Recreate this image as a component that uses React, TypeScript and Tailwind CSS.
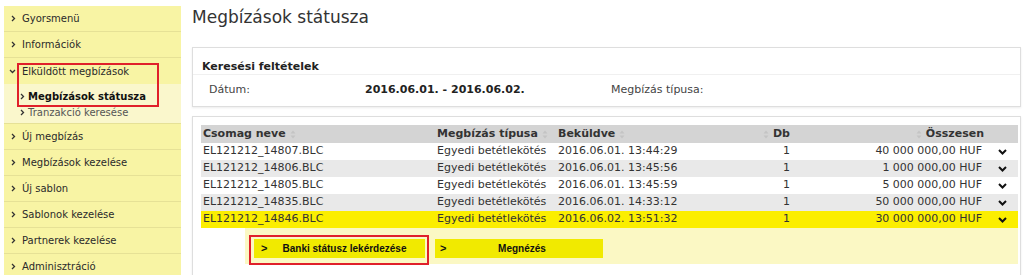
import React from 'react';

const menu = [
  'Gyorsmenü',
  'Információk',
];

const menuAfter = [
  'Új megbízás',
  'Megbízások kezelése',
  'Új sablon',
  'Sablonok kezelése',
  'Partnerek kezelése',
  'Adminisztráció',
];

const rows = [
  { name: 'EL121212_14807.BLC', date: '2016.06.01. 13:44:29', sum: '40 000 000,00 HUF' },
  { name: 'EL121212_14806.BLC', date: '2016.06.01. 13:45:56', sum: '1 000 000,00 HUF' },
  { name: 'EL121212_14805.BLC', date: '2016.06.01. 13:45:59', sum: '5 000 000,00 HUF' },
  { name: 'EL121212_14835.BLC', date: '2016.06.01. 14:33:12', sum: '50 000 000,00 HUF' },
  { name: 'EL121212_14846.BLC', date: '2016.06.02. 13:51:32', sum: '30 000 000,00 HUF' },
];

const SortIcon = () => (
  <svg width="6" height="9" viewBox="0 0 6 9" className="inline-block mx-[4px]">
    <path d="M3 0.5 L5.5 3.5 H0.5 Z" fill="#c4c4c4" />
    <path d="M3 8.5 L5.5 5.5 H0.5 Z" fill="#c4c4c4" />
  </svg>
);

const Chevron = ({ down = false }: { down?: boolean }) => (
  <svg width="5" height="7" viewBox="0 0 5 7" className={down ? 'rotate-90' : ''}>
    <path d="M1 1 L3.5 3.5 L1 6" stroke="#333" strokeWidth="1.3" fill="none" />
  </svg>
);

const RowChevron = () => (
  <svg width="9" height="6" viewBox="0 0 9 6">
    <path d="M1 1 L4.5 4.5 L8 1" stroke="#111" strokeWidth="2" fill="none" />
  </svg>
);

const MenuItem = ({ label }: { label: string }) => (
  <div className="h-[26px] border-b border-[#e6e196] flex items-center pl-[7px] gap-[6px]">
    <Chevron />
    <span>{label}</span>
  </div>
);

const App: React.FC = () => {
  return (
    <div className="w-[1024px] h-[275px] overflow-hidden bg-white flex pt-[6px] pl-[4px] text-[11px] text-[#333] font-['DejaVu_Sans',Verdana,sans-serif]">
      <div className="relative w-[177px] shrink-0 bg-[#f8f4a4] self-start text-[10px] text-[#2a2a2a]">
        {menu.map((m) => (
          <MenuItem key={m} label={m} />
        ))}
        <div className="h-[26px] flex items-center pl-[6px] gap-[7px]">
          <Chevron down />
          <span>Elküldött megbízások</span>
        </div>
        <div className="bg-[#faf7cc] pt-[4px] pb-[3px] border-b border-[#e6e196]">
          <div className="h-[16px] flex items-center pl-[16px] gap-[3px] font-bold text-[#111]">
            <Chevron />
            <span>Megbízások státusza</span>
          </div>
          <div className="h-[16px] flex items-center pl-[16px] gap-[3px] text-[#555]">
            <Chevron />
            <span>Tranzakció keresése</span>
          </div>
        </div>
        {menuAfter.map((m) => (
          <MenuItem key={m} label={m} />
        ))}
        <div className="absolute left-[13px] top-[57px] w-[142px] h-[44px] border-2 border-[#e0202a]" />
      </div>

      <div className="ml-[11px] flex-1 pr-[3px]">
        <h1 className="h-[41px] text-[17px] leading-[22px] text-[#333] font-normal">Megbízások státusza</h1>

        <div className="border border-[#dedede] shadow-[0_1px_2px_rgba(0,0,0,0.08)]">
          <div className="pt-[11px] pb-[1px] pl-[9px] h-[27px] border-b border-[#f0f0f0] font-bold text-[#222]">
            Keresési feltételek
          </div>
          <div className="h-[31px] flex items-center pl-[16px] text-[#444]">
            <span className="w-[156px]">Dátum:</span>
            <span className="w-[246px] font-bold text-[#222]">2016.06.01. - 2016.06.02.</span>
            <span>Megbízás típusa:</span>
          </div>
        </div>

        <div className="mt-[9px] border border-[#dedede] shadow-[0_1px_2px_rgba(0,0,0,0.08)] pt-[8px] pl-[8px] pr-[2px] h-[200px]">
          <div className="grid grid-cols-[236px_121px_150px_84px_194px_32px]">
            <div className="contents font-bold text-[#333]">
              <div className="bg-[#d4d4d4] h-[18px] flex items-center pl-[2px]">Csomag neve<SortIcon /></div>
              <div className="bg-[#d4d4d4] h-[18px] flex items-center">Megbízás típusa<SortIcon /></div>
              <div className="bg-[#d4d4d4] h-[18px] flex items-center">Beküldve<SortIcon /></div>
              <div className="bg-[#d4d4d4] h-[18px] flex items-center justify-end pr-[2px]"><SortIcon />Db</div>
              <div className="bg-[#d4d4d4] h-[18px] flex items-center justify-end pr-[2px]"><SortIcon />Összesen</div>
              <div className="bg-[#d4d4d4] h-[18px]" />
            </div>
            {rows.map((r, i) => {
              const bg = i === 4 ? 'bg-[#fbee00]' : i % 2 === 1 ? 'bg-[#e9e9e9]' : 'bg-white';
              return (
                <div key={r.name} className="contents">
                  <div className={`${bg} h-[17px] flex items-center pl-[2px]`}>{r.name}</div>
                  <div className={`${bg} h-[17px] flex items-center`}>Egyedi betétlekötés</div>
                  <div className={`${bg} h-[17px] flex items-center`}>{r.date}</div>
                  <div className={`${bg} h-[17px] flex items-center justify-end pr-[2px]`}>1</div>
                  <div className={`${bg} h-[17px] flex items-center justify-end pr-[4px]`}>{r.sum}</div>
                  <div className={`${bg} h-[17px] flex items-center justify-center`}><RowChevron /></div>
                </div>
              );
            })}
          </div>
          <div className="ml-[44px] h-[36px] bg-[#fbf8c4] flex items-start pt-[11px] pl-[9px] gap-[10px] font-['Liberation_Sans',Arial,sans-serif] font-bold text-[10px] text-[#111]">
            <div className="relative w-[171px] h-[19px] bg-[#f1ea00] flex items-center">
              <span className="absolute left-[7px] text-[11px] font-bold">&gt;</span>
              <span className="w-full text-center pl-[10px]">Banki státusz lekérdezése</span>
              <div className="absolute -left-[5px] -top-[4px] w-[180px] h-[30px] border-2 border-[#e0202a]" />
            </div>
            <div className="relative w-[168px] h-[19px] bg-[#f1ea00] flex items-center">
              <span className="absolute left-[5px] text-[11px] font-bold">&gt;</span>
              <span className="w-full text-center pl-[6px]">Megnézés</span>
            </div>
          </div>
        </div>
      </div>
    </div>
  );
};

export default App;
